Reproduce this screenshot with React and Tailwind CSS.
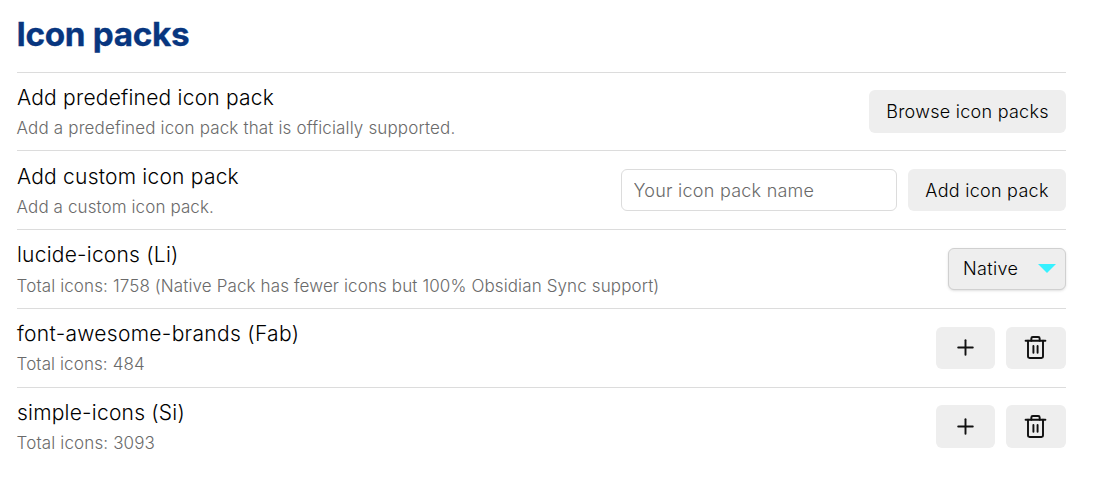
import { Plus } from 'lucide-react';

function TrashIcon() {
  return (
    <svg className="mr-[2px]" width="25" height="25" viewBox="0 0 24 24" fill="none" stroke="currentColor" strokeWidth="1.85" strokeLinecap="round" strokeLinejoin="round">
      <path d="M2.5 5.5h19" />
      <path d="M19.2 5.5v15c0 .8-.7 1.5-1.5 1.5H6.3c-.8 0-1.5-.7-1.5-1.5v-15" />
      <path d="M8 5.5V3.4c0-.8.6-1.4 1.4-1.4h5.2c.8 0 1.4.6 1.4 1.4v2.1" />
      <path d="M10 10.5v6.5M14 10.5v6.5" />
    </svg>
  );
}

function Row({ title, desc, titleClass, descClass, children }) {
  return (
    <div className="flex h-[78.75px] items-center justify-between border-t border-[#dcdcdc]">
      <div className="pt-[0.8px]">
        <div className={`text-[21px] leading-[27px] font-light text-black ${titleClass}`}>{title}</div>
        <div className={`mt-[5.3px] -ml-[0.4px] text-[17px] leading-[24px] font-light text-[#6a6a6a] ${descClass}`}>{desc}</div>
      </div>
      <div className="flex items-center gap-[11px]">{children}</div>
    </div>
  );
}

function PackActions() {
  return (
    <>
      <button aria-label="Add icon" className="flex h-[42.3px] w-[59px] items-center justify-center rounded-md bg-[#eeeeee] text-[#111111]">
        <Plus size={25} strokeWidth={1.85} />
      </button>
      <button aria-label="Delete pack" className="flex h-[42.3px] w-[60px] items-center justify-center rounded-md bg-[#eeeeee] text-[#111111]">
        <TrashIcon />
      </button>
    </>
  );
}

export default function App() {
  return (
    <main className="h-[487px] w-[1100px] bg-white pt-[14px] pr-[34px] pl-[17px] font-['Inter',sans-serif]">
      <h1 className="-ml-[0.5px] h-[57.7px] text-[33.3px] leading-[41px] font-bold tracking-[-0.35px] text-[#08367f] [-webkit-text-stroke:0.3px_#08367f]">Icon packs</h1>
      <Row title="Add predefined icon pack" desc="Add a predefined icon pack that is officially supported." titleClass="tracking-[0.22px]" descClass="tracking-[0.15px]">
        <button className="h-[42.3px] w-[197px] rounded-md bg-[#eeeeee] text-[18px] font-light tracking-[0.27px] text-black">Browse icon packs</button>
      </Row>
      <Row title="Add custom icon pack" desc="Add a custom icon pack." titleClass="tracking-[0.22px]" descClass="tracking-[0.1px]">
        <input placeholder="Your icon pack name" className="h-[42.3px] w-[276px] rounded-md border border-[#dcdcdc] px-[11.5px] text-[18px] font-light tracking-[0.24px] placeholder:text-[#6a6a6a]" />
        <button className="h-[42.3px] w-[158px] rounded-md bg-[#eeeeee] text-[18px] font-light tracking-[0.27px] text-black">Add icon pack</button>
      </Row>
      <Row title="lucide-icons (Li)" desc="Total icons: 1758 (Native Pack has fewer icons but 100% Obsidian Sync support)" titleClass="tracking-[0.22px]" descClass="tracking-[0.12px]">
        <button className="flex h-[42.3px] w-[118px] items-center justify-between rounded-md border border-[#d0d0d0] bg-[#eeeeee] pr-[9px] pb-[0.8px] pl-[14px] text-[18px] font-light tracking-[0.35px] text-black shadow-sm">
          Native
          <svg width="18" height="9" viewBox="0 0 18 9"><path d="M0 0H18L9 9Z" fill="#36f1ff" /></svg>
        </button>
      </Row>
      <Row title="font-awesome-brands (Fab)" desc="Total icons: 484" titleClass="tracking-[0.31px]" descClass="tracking-[0.1px]"><PackActions /></Row>
      <Row title="simple-icons (Si)" desc="Total icons: 3093" titleClass="tracking-[0.22px]" descClass="tracking-[0.14px]"><PackActions /></Row>
    </main>
  );
}
